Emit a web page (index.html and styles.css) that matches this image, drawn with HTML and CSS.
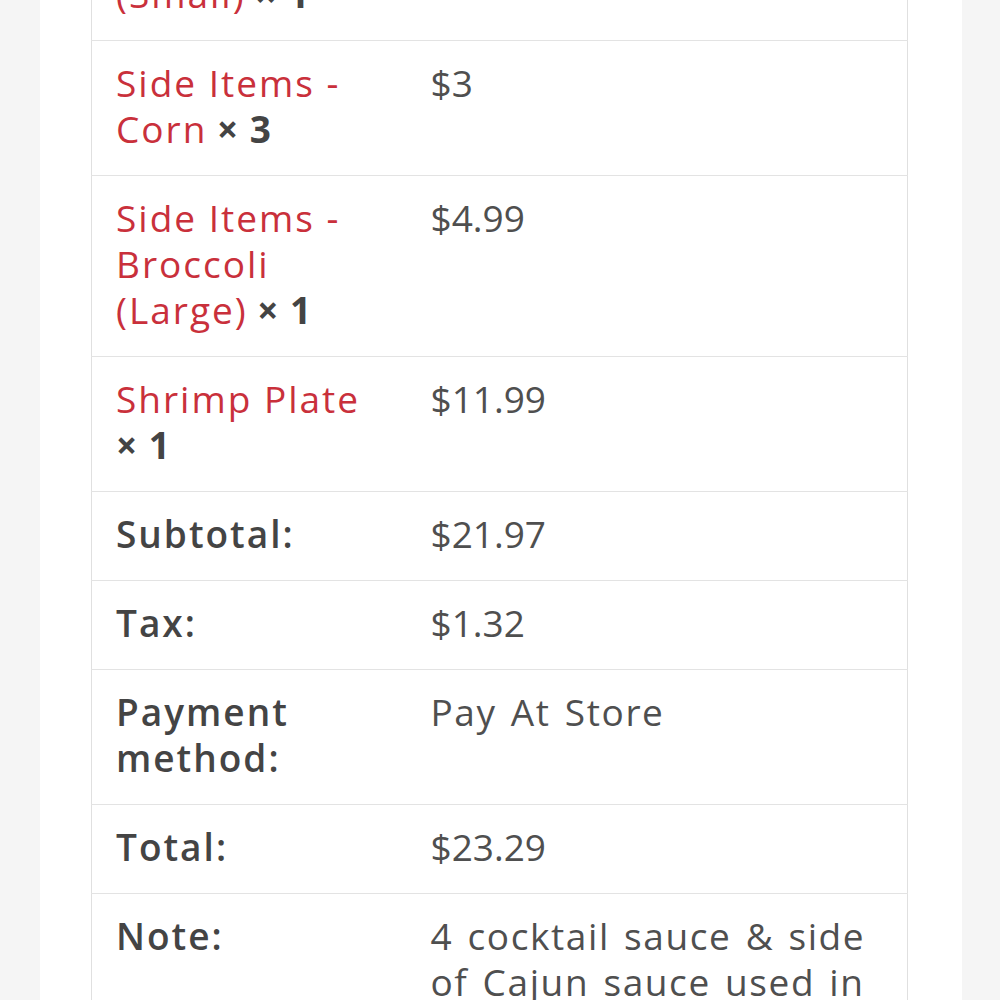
FILE: index.html
```html
<!DOCTYPE html>
<html lang="en">
<head>
  <meta charset="UTF-8">
  <title>Order Details</title>
  <link rel="stylesheet" href="styles.css">
</head>
<body>
  <div class="page">
    <table class="order-table">
      <colgroup>
        <col class="col-label">
        <col class="col-value">
      </colgroup>
      <tbody>
        <tr>
          <td><span class="item-name">Side Items - Broccoli (Small)</span> <strong class="qty">&times;&nbsp;1</strong></td>
          <td>$1.99</td>
        </tr>
        <tr>
          <td><span class="item-name">Side Items - Corn</span> <strong class="qty">&times;&nbsp;3</strong></td>
          <td>$3</td>
        </tr>
        <tr>
          <td><span class="item-name">Side Items - Broccoli (Large)</span> <strong class="qty">&times;&nbsp;1</strong></td>
          <td>$4.99</td>
        </tr>
        <tr>
          <td><span class="item-name">Shrimp Plate</span> <strong class="qty">&times;&nbsp;1</strong></td>
          <td>$11.99</td>
        </tr>
        <tr>
          <th>Subtotal:</th>
          <td>$21.97</td>
        </tr>
        <tr>
          <th>Tax:</th>
          <td>$1.32</td>
        </tr>
        <tr>
          <th>Payment method:</th>
          <td class="text-value">Pay At Store</td>
        </tr>
        <tr>
          <th>Total:</th>
          <td>$23.29</td>
        </tr>
        <tr>
          <th>Note:</th>
          <td class="text-value">4 cocktail sauce &amp; side of Cajun sauce used in the shrimp plate</td>
        </tr>
      </tbody>
    </table>
  </div>
</body>
</html>
```

FILE: styles.css
```css
body {
  margin: 0;
  background: #f5f5f5;
  font-family: "Open Sans", "Noto Sans", sans-serif;
  color: #4a4a4a;
}
.page {
  width: 922px;
  margin-left: 40px;
  background: #fff;
  padding: 0 55px 60px 51px;
  box-sizing: border-box;
  overflow: hidden;
}
.order-table {
  width: 817px;
  margin-top: -140px;
  border-collapse: collapse;
  table-layout: fixed;
  border-left: 1px solid #e0e0e0;
  border-right: 1px solid #e0e0e0;
}
.col-label {
  width: 315px;
}
.order-table th,
.order-table td {
  padding: 19px 24px 23px;
  font-size: 37px;
  line-height: 46px;
  text-align: left;
  vertical-align: top;
  border-bottom: 1px solid #e3e3e3;
}
.order-table th {
  font-weight: 600;
  color: #444;
  letter-spacing: 2px;
}
.order-table td {
  font-weight: 400;
  color: #4f4f4f;
}
.order-table .text-value {
  letter-spacing: 1.6px;
  word-spacing: 3px;
}
.item-name {
  color: #c9303b;
  letter-spacing: 2px;
}
.qty {
  font-weight: 700;
  color: #444;
  letter-spacing: 1px;
}
```
